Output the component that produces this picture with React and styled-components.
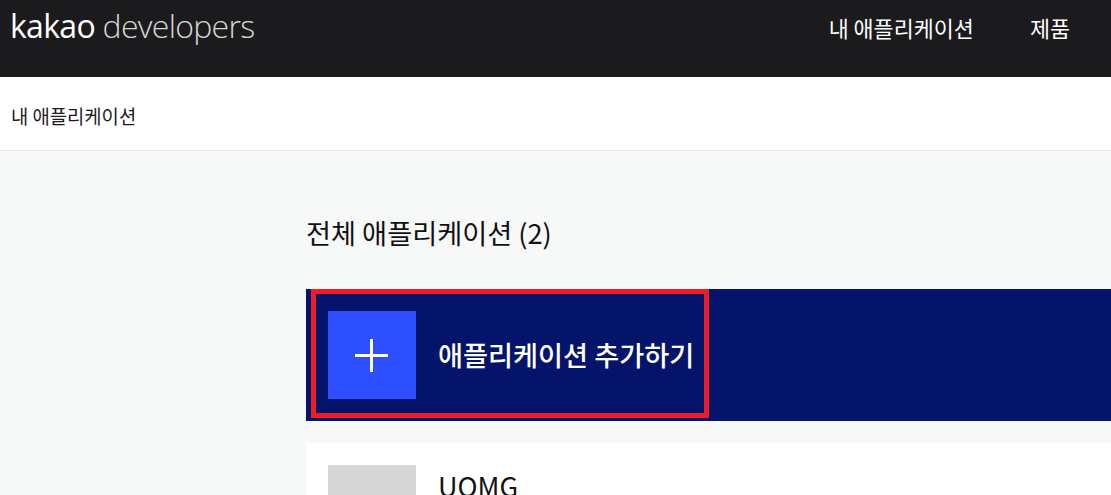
import React from "react";
import styled, { createGlobalStyle } from "styled-components";

const KR = `"Noto Sans CJK KR", "Noto Sans", sans-serif`;

const Global = createGlobalStyle`
  html, body { margin: 0; padding: 0; background: #f7f8f8; }
  body { width: 1111px; height: 495px; overflow: hidden; font-family: ${KR}; }
`;

const Page = styled.div`
  width: 1111px;
  height: 495px;
  overflow: hidden;
  display: flex;
  flex-direction: column;
`;

const Header = styled.header`
  height: 77px;
  flex: none;
  background: #1b1b1d;
  display: flex;
  justify-content: space-between;
  align-items: flex-start;
  padding: 0 41px 0 10px;
  box-sizing: border-box;
`;

const Logo = styled.div`
  font-family: "Open Sans", sans-serif;
  font-size: 32px;
  line-height: 52px;
  letter-spacing: -0.7px;
  color: #fff;
  font-weight: 400;
  span { font-weight: 300; color: #d6d6d6; }
`;

const Nav = styled.nav`
  display: flex;
  gap: 56px;
`;

const NavLink = styled.a`
  font-size: 21.8px;
  line-height: 55px;
  font-weight: 400;
  color: #fff;
`;

const Crumbs = styled.div`
  height: 74px;
  flex: none;
  box-sizing: border-box;
  background: #fff;
  border-bottom: 1px solid #e5e5e5;
  padding-left: 11px;
  font-size: 18.8px;
  line-height: 78px;
  color: #1c1c1c;
`;

const Main = styled.main`
  flex: 1;
  padding-left: 306px;
  display: flex;
  flex-direction: column;
`;

const Title = styled.h2`
  margin: 0;
  padding-top: 60px;
  height: 138px;
  box-sizing: border-box;
  font-size: 27.2px;
  line-height: 42px;
  font-weight: 400;
  color: #111;
`;

const Row = styled.div`
  display: flex;
  align-items: center;
  gap: 22px;
  padding: 22px;
  height: 132px;
  flex: none;
  box-sizing: border-box;
  background: ${(p) => (p.$add ? "#03146a" : "#fff")};
  color: ${(p) => (p.$add ? "#fff" : "#111")};
  position: relative;
  margin-bottom: 22px;
`;

const Thumb = styled.div`
  width: 88px;
  height: 88px;
  flex: none;
  background: ${(p) => p.$color};
  display: flex;
  align-items: center;
  justify-content: center;
`;

const RowName = styled.div`
  font-size: ${(p) => (p.$add ? "27.2px" : "27px")};
  font-weight: ${(p) => (p.$add ? 500 : 400)};
  line-height: ${(p) => (p.$add ? "36px" : "44px")};
  align-self: ${(p) => (p.$add ? "center" : "flex-start")};
  padding-bottom: ${(p) => (p.$add ? "2px" : "0")};
  margin-top: ${(p) => (p.$add ? "0" : "-1px")};
`;

const Highlight = styled.div`
  position: absolute;
  left: 5px;
  top: 0;
  width: 398px;
  height: 129px;
  box-sizing: border-box;
  border: 5px solid #ee1c25;
  pointer-events: none;
`;

const PlusIcon = () => (
  <svg width="33" height="33" viewBox="0 0 33 33" style={{ marginLeft: "-1px", display: "block" }}>
    <rect x="0" y="15" width="33" height="3" fill="#fff" />
    <rect x="15" y="0" width="3" height="33" fill="#fff" />
  </svg>
);

export default function App() {
  return (
    <Page>
      <Global />
      <Header>
        <Logo>
          kakao <span>developers</span>
        </Logo>
        <Nav>
          <NavLink>내 애플리케이션</NavLink>
          <NavLink>제품</NavLink>
        </Nav>
      </Header>
      <Crumbs>내 애플리케이션</Crumbs>
      <Main>
        <Title>전체 애플리케이션 (2)</Title>
        <Row $add>
          <Thumb $color="#2d4fff">
            <PlusIcon />
          </Thumb>
          <RowName $add>애플리케이션 추가하기</RowName>
          <Highlight />
        </Row>
        <Row>
          <Thumb $color="#d6d6d6" />
          <RowName>UOMG</RowName>
        </Row>
      </Main>
    </Page>
  );
}
